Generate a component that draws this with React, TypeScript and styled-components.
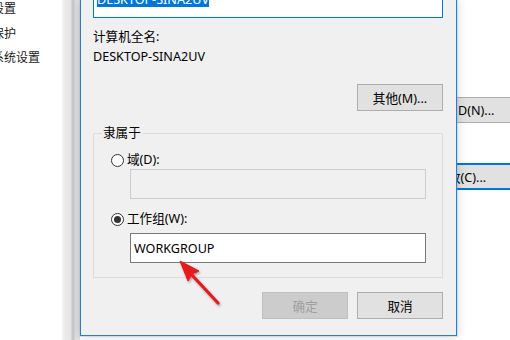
import React, { FC } from 'react';
import styled, { createGlobalStyle } from 'styled-components';

const GlobalStyle = createGlobalStyle`
  html, body {
    margin: 0;
    padding: 0;
    background: #fff;
    overflow: hidden;
  }
  body {
    font-family: 'Noto Sans', 'Noto Sans CJK SC', sans-serif;
    font-size: 12.6px;
    color: #000;
  }
`;

const Screen = styled.div`
  position: relative;
  display: flex;
  width: 510px;
  height: 340px;
  overflow: hidden;
  background: #fff;
`;

const SideLinks = styled.div`
  width: 62px;
  flex-shrink: 0;
  display: flex;
  flex-direction: column;
  gap: 8.5px;
  overflow: hidden;
`;

const SideLink = styled.span`
  margin-left: -32px;
  line-height: 16px;
  font-size: 12px;
  white-space: nowrap;
  color: #1a1a1a;
  font-family: 'Noto Sans CJK SC', sans-serif;
`;

const WindowEdge = styled.div`
  width: 18px;
  flex-shrink: 0;
  background: linear-gradient(
    to right,
    #f7f7f7 0px,
    #ececec 2px,
    #e6e6e6 9px,
    #c9c9c9 10px,
    #c9c9c9 12px,
    #dddddd 13px,
    #e4e4e4 18px
  );
`;

const Dialog = styled.div`
  position: relative;
  z-index: 1;
  width: 377px;
  height: 336px;
  box-sizing: border-box;
  flex-shrink: 0;
  display: flex;
  flex-direction: column;
  padding: 0 13px 16px 12px;
  background: #f0f0f0;
  border: 1px solid #2f7cc4;
  border-top: none;
  box-shadow: 0 0 0 1px rgba(120, 170, 220, 0.25), 0 0 10px rgba(0, 0, 0, 0.18);
`;

const TextBox = styled.div<{ $focused?: boolean; $disabled?: boolean }>`
  box-sizing: border-box;
  height: ${p => (p.$focused ? 28 : 30)}px;
  padding: ${p => (p.$focused ? '2px 3px' : '0 3px')};
  display: flex;
  align-items: ${p => (p.$focused ? 'flex-start' : 'center')};
  background: ${p => (p.$disabled ? '#f0f0f0' : '#fff')};
  border: 1px solid ${p => (p.$focused ? '#0078d7' : p.$disabled ? '#cccccc' : '#7a7a7a')};
  white-space: nowrap;
`;

const NameBox = styled(TextBox)`
  margin-top: -10px;
`;

const Selected = styled.span`
  background: #0078d7;
  color: #fff;
  line-height: 15px;
  margin-top: -1px;
`;

const Label = styled.div<{ $gap: number }>`
  margin-top: ${p => p.$gap}px;
  line-height: 16px;
`;

const Button = styled.button<{ $disabled?: boolean }>`
  box-sizing: border-box;
  width: 86px;
  height: ${p => (p.$disabled !== undefined ? 27 : 28)}px;
  padding: 0;
  font: inherit;
  color: ${p => (p.$disabled ? '#a0a0a0' : '#000')};
  background: ${p => (p.$disabled ? '#cccccc' : '#e1e1e1')};
  border: 1px solid ${p => (p.$disabled ? '#bfbfbf' : '#adadad')};
`;

const MoreButton = styled(Button)`
  align-self: flex-end;
  margin-top: 19px;
`;

const Group = styled.fieldset`
  margin: 13px 0 0;
  padding: 10px 16px 14px 17px;
  border: 1px solid #dcdcdc;
  min-width: 0;
`;

const GroupTitle = styled.legend`
  padding: 0 1px;
  margin-left: -9px;
  line-height: 18px;
`;

const RadioRow = styled.label<{ $gap: number }>`
  display: flex;
  align-items: center;
  gap: 3px;
  margin-top: ${p => p.$gap}px;
  line-height: 16px;
`;

const RadioDot = styled.span<{ $checked?: boolean }>`
  box-sizing: border-box;
  width: 13px;
  height: 13px;
  border-radius: 50%;
  border: 1px solid #333;
  background: #fff;
  display: flex;
  align-items: center;
  justify-content: center;

  &::after {
    content: '';
    width: 7px;
    height: 7px;
    border-radius: 50%;
    background: ${p => (p.$checked ? '#333' : 'transparent')};
  }
`;

const FieldBox = styled(TextBox)<{ $gap: number }>`
  margin: ${p => p.$gap}px 0 0 19px;
`;

const Footer = styled.div`
  display: flex;
  justify-content: flex-end;
  gap: 9px;
  margin-top: 14px;
`;

const BehindStrip = styled.div`
  flex: 1;
  display: flex;
  flex-direction: column;
  overflow: hidden;
  background: #fff;
`;

const BehindButton = styled.div<{ $focused?: boolean; $top: number }>`
  box-sizing: border-box;
  margin-top: ${p => p.$top}px;
  height: ${p => (p.$focused ? 27 : 26)}px;
  display: flex;
  align-items: center;
  padding-left: 1px;
  white-space: nowrap;
  overflow: hidden;
  background: #e1e1e1;
  border: solid ${p => (p.$focused ? '#0078d7' : '#adadad')};
  border-width: ${p => (p.$focused ? '2px 0' : '1px 0')};
`;

const CutText = styled.span<{ $shift: number }>`
  margin-left: ${p => p.$shift}px;
`;

const Arrow = styled.svg`
  position: absolute;
  left: 0;
  top: 0;
  z-index: 2;
  pointer-events: none;
`;

const App: FC = () => (
  <>
    <GlobalStyle />
    <Screen>
      <SideLinks>
        <SideLink>远程设置</SideLink>
        <SideLink>系统保护</SideLink>
        <SideLink>高级系统设置</SideLink>
      </SideLinks>
      <WindowEdge />
      <Dialog>
        <NameBox $focused>
          <Selected>DESKTOP-SINA2UV</Selected>
        </NameBox>
        <Label $gap={11}>计算机全名:</Label>
        <Label $gap={4}>DESKTOP-SINA2UV</Label>
        <MoreButton>其他(M)...</MoreButton>
        <Group>
          <GroupTitle>隶属于</GroupTitle>
          <RadioRow $gap={0}>
            <RadioDot />
            域(D):
          </RadioRow>
          <FieldBox $gap={1} $disabled />
          <RadioRow $gap={12}>
            <RadioDot $checked />
            工作组(W):
          </RadioRow>
          <FieldBox $gap={6}>WORKGROUP</FieldBox>
        </Group>
        <Footer>
          <Button $disabled>确定</Button>
          <Button $disabled={false}>取消</Button>
        </Footer>
      </Dialog>
      <BehindStrip>
        <BehindButton $top={97}>
          <CutText $shift={0}>D(N)...</CutText>
        </BehindButton>
        <BehindButton $top={40} $focused>
          <CutText $shift={-10}>改(C)...</CutText>
        </BehindButton>
      </BehindStrip>
      <Arrow width="510" height="340" viewBox="0 0 510 340">
        <defs>
          <filter id="arrowShadow" x="-50%" y="-50%" width="200%" height="200%">
            <feDropShadow dx="1" dy="1.5" stdDeviation="1.2" floodColor="#000" floodOpacity="0.35" />
          </filter>
        </defs>
        <g filter="url(#arrowShadow)" fill="#e51a1f" stroke="#e51a1f">
          <line x1="218" y1="303" x2="191" y2="274" strokeWidth="3.2" strokeLinecap="round" />
          <polygon points="180,261 199,271 192,274 188,281" strokeWidth="1" strokeLinejoin="round" />
        </g>
      </Arrow>
    </Screen>
  </>
);

export default App;
